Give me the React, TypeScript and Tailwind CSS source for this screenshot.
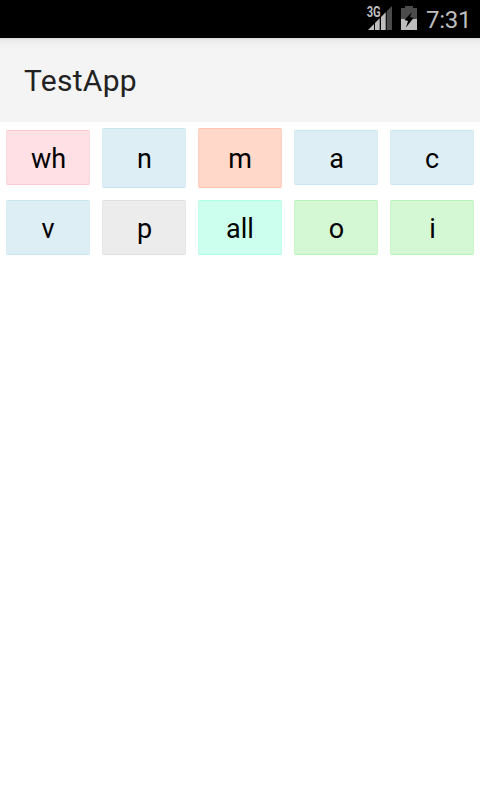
const tiles = [
  { label: 'wh', style: 'h-[55px] pl-px bg-[#ffe0e5] border-y-[#ffc9d3] border-x-[#ffd8df]' },
  { label: 'n', style: 'h-[60px] pl-px bg-[#deeef5] border-y-[#c8e6ef] border-x-[#d6ebf3]' },
  { label: 'm', style: 'h-[60px] bg-[#ffd8ca] border-y-[#ffc2ab] border-x-[#ffd0bf]' },
  { label: 'a', style: 'h-[55px] pl-px bg-[#deeef5] border-y-[#c8e6ef] border-x-[#d6ebf3]' },
  { label: 'c', style: 'h-[55px] bg-[#deeef5] border-y-[#c8e6ef] border-x-[#d6ebf3]' },
  { label: 'v', style: 'h-[55px] bg-[#deeef5] border-y-[#c8e6ef] border-x-[#d6ebf3]' },
  { label: 'p', style: 'h-[55px] pl-px bg-[#ececec] border-y-[#e0e0e0] border-x-[#e6e6e6]' },
  { label: 'all', style: 'h-[55px] bg-[#ccffee] border-y-[#adffe3] border-x-[#c0ffe9]' },
  { label: 'o', style: 'h-[55px] pl-px bg-[#d4f7d4] border-y-[#b8f2b8] border-x-[#caf5ca]' },
  { label: 'i', style: 'h-[55px] pl-px bg-[#d4f7d4] border-y-[#b8f2b8] border-x-[#caf5ca]' },
];

function SignalIcon() {
  return (
    <svg width="26" height="26" viewBox="0 0 26 26" className="mt-[5px]">
      <path d="M2 25 8 19V25Z" fill="#bebebe" />
      <path d="M9 18 13.7 13.3V25H9Z" fill="#bebebe" />
      <path d="M15 12 19.7 7.3V25H15Z" fill="#bebebe" />
      <path d="M20.7 6.3 26 1V25H20.7Z" fill="#4b4b4b" />
      <text x="0.7" y="12" fontSize="14" fontWeight="700" textLength="14" lengthAdjust="spacingAndGlyphs" fill="#bebebe" stroke="#000" strokeWidth="1" paintOrder="stroke">3G</text>
    </svg>
  );
}

function BatteryIcon() {
  return (
    <svg width="16" height="24" viewBox="0 0 16 24" className="mt-[6px] ml-[9px]">
      <path d="M4 0H12V2H16V13H0V2H4Z" fill="#4b4b4b" />
      <path d="M0 13H16V24H0Z" fill="#bebebe" />
      <path d="M11 6 3.5 14 7 15 5 21.5 12.5 12 9 11Z" fill="#000" />
    </svg>
  );
}

export default function App() {
  return (
    <div className="flex h-[800px] w-[480px] flex-col overflow-hidden bg-white font-['Roboto',sans-serif]">
      <div className="flex h-[38px] shrink-0 justify-end bg-black pr-[9px]">
        <SignalIcon />
        <BatteryIcon />
        <span className="ml-[9px] h-[38px] w-[45px] text-[24px] leading-[40px] tracking-[-0.3px] text-[#bebebe]">7:31</span>
      </div>
      <header className="flex h-[84px] shrink-0 items-center bg-[#f4f4f4] bg-[linear-gradient(to_bottom,#d9d9d9_0,#e9e9e9_2px,#f0f0f0_6px,#f4f4f4_12px)] pt-0.5 pl-6">
        <h1 className="text-[30px] leading-[36px] tracking-[0.3px] text-[#222222]">TestApp</h1>
      </header>
      <main className="grid grid-cols-5 grid-rows-[71px_69px] items-center gap-x-3 px-1.5">
        {tiles.map((tile) => (
          <button
            key={tile.label}
            className={`flex items-center justify-center rounded-[2px] border pt-0.5 text-[27px] leading-8 text-black ${tile.style}`}
          >
            {tile.label}
          </button>
        ))}
      </main>
    </div>
  );
}
